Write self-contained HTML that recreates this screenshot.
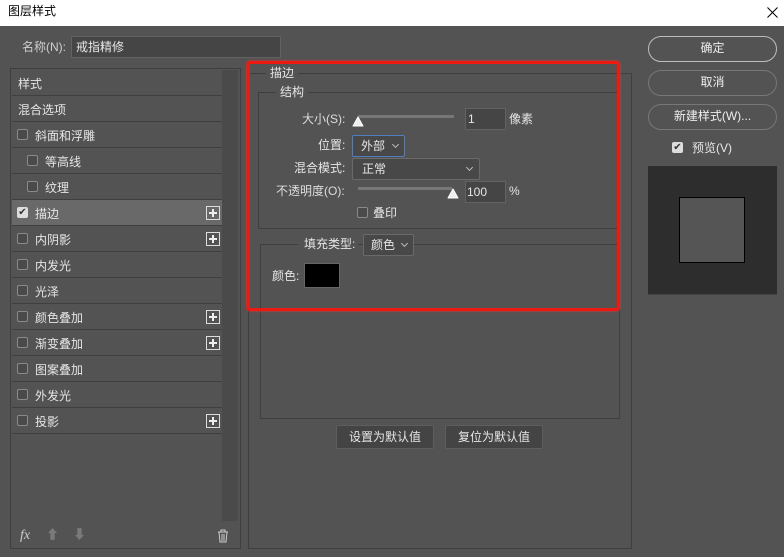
<!DOCTYPE html>
<html><head><meta charset="utf-8"><style>
*{margin:0;padding:0;box-sizing:border-box}
body{width:784px;height:557px;background:#535353;position:relative;overflow:hidden;font-family:"Liberation Sans","Noto Sans CJK SC",sans-serif;font-size:12px;color:#e6e6e6}
.a{position:absolute}
.t{position:absolute;white-space:nowrap;line-height:14px}
.row{position:absolute;left:12px;width:210px;height:26px;border-bottom:1px solid #3f3f3f}
.row span{position:absolute;top:5px;white-space:nowrap}
.cb{position:absolute;width:11px;height:11px;border:1px solid #8a8a8a;border-radius:2px;background:#4a4a4a}
.row .cb{top:7px!important}
.plus{position:absolute;right:2px;top:6px;width:14px;height:14px;border:1px solid #ddd}
.plus:before{content:"";position:absolute;left:2px;top:5px;width:8px;height:2px;background:#eee}
.plus:after{content:"";position:absolute;left:5px;top:2px;width:2px;height:8px;background:#eee}
.inp{position:absolute;background:#454545;border:1px solid #626262}
.sel{position:absolute;background:#484848;border:1px solid #6a6a6a;border-radius:2px}
.btn{position:absolute;border:1px solid #9a9a9a;border-radius:13px;text-align:center;line-height:23px;color:#eee}
.chev{position:absolute;width:5px;height:5px;border-right:1px solid #bbb;border-bottom:1px solid #bbb;transform:rotate(45deg)}
</style></head><body>
<div class="a" style="left:0;top:0;width:784px;height:26px;background:#fff"></div>
<div class="t" style="left:8px;top:4px;color:#000">图层样式</div>
<svg class="a" style="left:767px;top:7px" width="11" height="11"><path d="M0.5 0.5L10.5 10.5M10.5 0.5L0.5 10.5" stroke="#000" stroke-width="1"/></svg>

<div class="t" style="left:22px;top:40px;color:#cfcfcf">名称(N):</div>
<div class="inp" style="left:71px;top:36px;width:210px;height:22px"></div>
<div class="t" style="left:76px;top:40px">戒指精修</div>

<div class="a" style="left:10px;top:68px;width:231px;height:481px;border:1px solid #3f3f3f"></div>
<div class="a" style="left:222px;top:70px;width:16px;height:451px;background:#4a4a4a"></div>

<div class="row" style="top:70px"><span style="left:6px">样式</span></div>
<div class="row" style="top:96px"><span style="left:6px">混合选项</span></div>
<div class="row" style="top:122px"><div class="cb" style="left:5px;top:8px"></div><span style="left:23px">斜面和浮雕</span></div>
<div class="row" style="top:148px"><div class="cb" style="left:15px;top:8px"></div><span style="left:33px">等高线</span></div>
<div class="row" style="top:174px"><div class="cb" style="left:15px;top:8px"></div><span style="left:33px">纹理</span></div>
<div class="row" style="top:200px;background:#696969"><div class="cb" style="left:5px;top:8px;background:#ddd;border-color:#ddd;color:#333;font-size:10px;line-height:9px;text-align:center">✔</div><span style="left:23px">描边</span><div class="plus"></div></div>
<div class="row" style="top:226px"><div class="cb" style="left:5px;top:8px"></div><span style="left:23px">内阴影</span><div class="plus"></div></div>
<div class="row" style="top:252px"><div class="cb" style="left:5px;top:8px"></div><span style="left:23px">内发光</span></div>
<div class="row" style="top:278px"><div class="cb" style="left:5px;top:8px"></div><span style="left:23px">光泽</span></div>
<div class="row" style="top:304px"><div class="cb" style="left:5px;top:8px"></div><span style="left:23px">颜色叠加</span><div class="plus"></div></div>
<div class="row" style="top:330px"><div class="cb" style="left:5px;top:8px"></div><span style="left:23px">渐变叠加</span><div class="plus"></div></div>
<div class="row" style="top:356px"><div class="cb" style="left:5px;top:8px"></div><span style="left:23px">图案叠加</span></div>
<div class="row" style="top:382px"><div class="cb" style="left:5px;top:8px"></div><span style="left:23px">外发光</span></div>
<div class="row" style="top:408px"><div class="cb" style="left:5px;top:8px"></div><span style="left:23px">投影</span><div class="plus"></div></div>

<div class="t" style="left:20px;top:529px;font-style:italic;font-family:'Liberation Serif',serif;font-size:14px;color:#ccc">fx</div>
<div class="t" style="left:46px;top:528px;color:#7a7a7a;font-size:13px">⬆</div>
<div class="t" style="left:73px;top:528px;color:#7a7a7a;font-size:13px">⬇</div>
<svg class="a" style="left:217px;top:529px" width="12" height="14" viewBox="0 0 12 14"><path d="M1 3h10M4 3V1h4v2M2 3l1 10h6l1-10M5 5v7M7 5v7" stroke="#ccc" fill="none"/></svg>

<div class="a" style="left:248px;top:73px;width:384px;height:476px;border:1px solid #3f3f3f"></div>
<div class="t" style="left:266px;top:66px;background:#535353;padding:0 4px">描边</div>
<div class="a" style="left:258px;top:92px;width:362px;height:137px;border:1px solid #3f3f3f"></div>
<div class="t" style="left:276px;top:85px;background:#535353;padding:0 4px">结构</div>

<div class="t" style="left:302px;top:112px;color:#ddd">大小(S):</div>
<div class="a" style="left:358px;top:115px;width:96px;height:3px;background:#777"></div>
<svg class="a" style="left:352px;top:115px" width="12" height="12"><path d="M1 11L6 2l5 9z" fill="#eee" stroke="#fff" stroke-linejoin="round"/></svg>
<div class="inp" style="left:465px;top:108px;width:41px;height:22px"></div>
<div class="t" style="left:468px;top:112px">1</div>
<div class="t" style="left:509px;top:112px">像素</div>

<div class="t" style="left:318px;top:138px">位置:</div>
<div class="sel" style="left:352px;top:135px;width:53px;height:22px;border-color:#4f7fc2"></div>
<div class="t" style="left:361px;top:139px">外部</div>
<div class="chev" style="left:393px;top:142px"></div>

<div class="t" style="left:294px;top:161px">混合模式:</div>
<div class="sel" style="left:352px;top:158px;width:128px;height:22px"></div>
<div class="t" style="left:362px;top:162px">正常</div>
<div class="chev" style="left:467px;top:165px"></div>

<div class="t" style="left:276px;top:184px;color:#ddd">不透明度(O):</div>
<div class="a" style="left:358px;top:187px;width:94px;height:3px;background:#777"></div>
<svg class="a" style="left:447px;top:187px" width="12" height="12"><path d="M1 11L6 2l5 9z" fill="#eee" stroke="#fff" stroke-linejoin="round"/></svg>
<div class="inp" style="left:465px;top:181px;width:41px;height:22px"></div>
<div class="t" style="left:467px;top:185px">100</div>
<div class="t" style="left:509px;top:184px">%</div>

<div class="cb" style="left:357px;top:207px"></div>
<div class="t" style="left:373px;top:206px">叠印</div>

<div class="a" style="left:260px;top:244px;width:360px;height:175px;border:1px solid #3f3f3f"></div>
<div class="t" style="left:298px;top:237px;background:#535353;padding:0 3px 0 6px">填充类型:</div>
<div class="sel" style="left:363px;top:234px;width:51px;height:22px"></div>
<div class="t" style="left:371px;top:238px">颜色</div>
<div class="chev" style="left:402px;top:241px"></div>
<div class="t" style="left:272px;top:269px">颜色:</div>
<div class="a" style="left:304px;top:263px;width:36px;height:25px;background:#000;border:1px solid #666"></div>

<div class="a" style="left:247px;top:61px;width:373px;height:250px;border:3px solid #ec1a10;border-radius:3px;box-shadow:0 0 2px #f33"></div>

<div class="a" style="left:336px;top:425px;width:98px;height:24px;background:#444;border:1px solid #5e5e5e;border-radius:2px;text-align:center;line-height:22px">设置为默认值</div>
<div class="a" style="left:445px;top:425px;width:98px;height:24px;background:#444;border:1px solid #5e5e5e;border-radius:2px;text-align:center;line-height:22px">复位为默认值</div>

<div class="btn" style="left:648px;top:36px;width:129px;height:26px;border-color:#bdbdbd">确定</div>
<div class="btn" style="left:648px;top:70px;width:129px;height:26px;border-color:#777">取消</div>
<div class="btn" style="left:648px;top:104px;width:129px;height:26px;border-color:#777">新建样式(W)...</div>
<div class="cb" style="left:672px;top:142px;background:#ddd;border-color:#ddd;color:#333;font-size:10px;line-height:9px;text-align:center">✔</div>
<div class="t" style="left:692px;top:141px">预览(V)</div>
<div class="a" style="left:648px;top:166px;width:129px;height:129px;background:#2d2d2d;border-bottom:1px solid #444"></div>
<div class="a" style="left:679px;top:197px;width:66px;height:66px;background:#555;border:1px solid #000"></div>
</body></html>
